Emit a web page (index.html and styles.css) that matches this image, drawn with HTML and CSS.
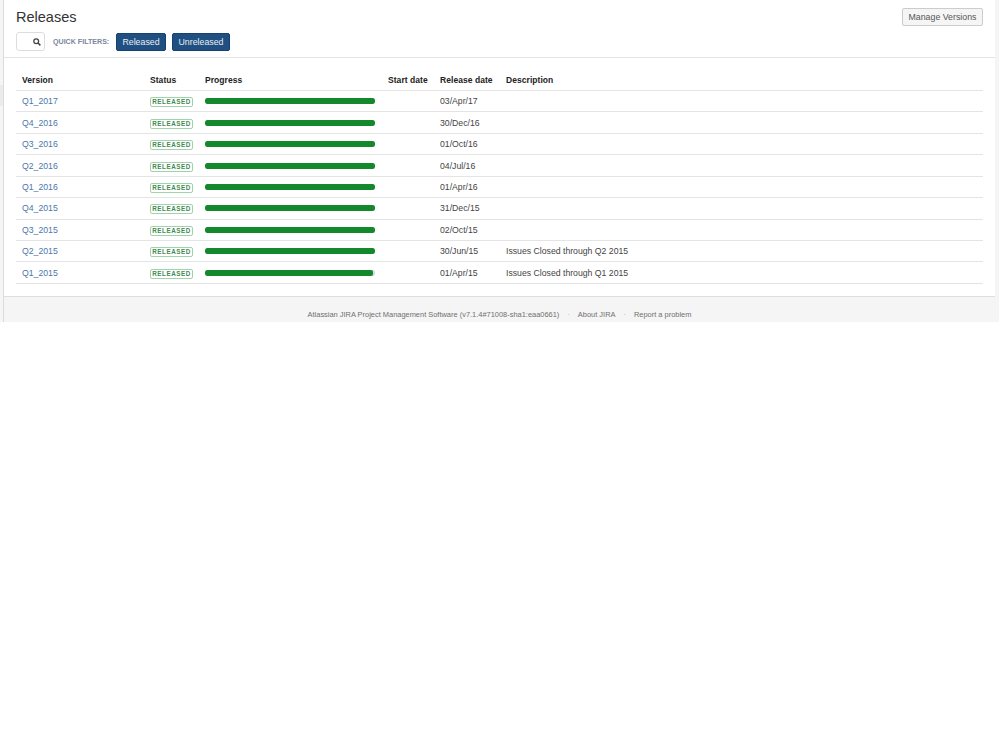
FILE: index.html
```html
<!DOCTYPE html>
<html lang="en">
<head>
<meta charset="utf-8">
<title>Releases</title>
<link rel="stylesheet" href="styles.css">
</head>
<body>
<div class="page">
  <main class="content">
    <header class="head">
      <div class="head-left">
        <h1 class="title">Releases</h1>
        <div class="filters">
          <div class="search">
            <svg class="search-icon" width="8" height="8" viewBox="0 0 10 10"><circle cx="4" cy="4" r="3" fill="none" stroke="#444" stroke-width="1.6"/><path d="M6.3 6.3 9.2 9.2" stroke="#444" stroke-width="1.9"/></svg>
          </div>
          <span class="filter-label">QUICK FILTERS:</span>
          <button class="filter-btn filter-released">Released</button>
          <button class="filter-btn filter-unreleased">Unreleased</button>
        </div>
      </div>
      <button class="manage">Manage Versions</button>
    </header>
    <section class="table-wrap">
      <table class="versions">
        <colgroup>
          <col class="c-version"><col class="c-status"><col class="c-progress"><col class="c-start"><col class="c-release"><col>
        </colgroup>
        <thead>
          <tr><th>Version</th><th>Status</th><th>Progress</th><th>Start date</th><th>Release date</th><th>Description</th></tr>
        </thead>
        <tbody>
          <tr><td><a href="#">Q1_2017</a></td><td><span class="lozenge">RELEASED</span></td><td><div class="bar"><div class="fill"></div></div></td><td></td><td>03/Apr/17</td><td></td></tr>
          <tr><td><a href="#">Q4_2016</a></td><td><span class="lozenge">RELEASED</span></td><td><div class="bar"><div class="fill"></div></div></td><td></td><td>30/Dec/16</td><td></td></tr>
          <tr><td><a href="#">Q3_2016</a></td><td><span class="lozenge">RELEASED</span></td><td><div class="bar"><div class="fill"></div></div></td><td></td><td>01/Oct/16</td><td></td></tr>
          <tr><td><a href="#">Q2_2016</a></td><td><span class="lozenge">RELEASED</span></td><td><div class="bar"><div class="fill"></div></div></td><td></td><td>04/Jul/16</td><td></td></tr>
          <tr><td><a href="#">Q1_2016</a></td><td><span class="lozenge">RELEASED</span></td><td><div class="bar"><div class="fill"></div></div></td><td></td><td>01/Apr/16</td><td></td></tr>
          <tr><td><a href="#">Q4_2015</a></td><td><span class="lozenge">RELEASED</span></td><td><div class="bar"><div class="fill"></div></div></td><td></td><td>31/Dec/15</td><td></td></tr>
          <tr><td><a href="#">Q3_2015</a></td><td><span class="lozenge">RELEASED</span></td><td><div class="bar"><div class="fill"></div></div></td><td></td><td>02/Oct/15</td><td></td></tr>
          <tr><td><a href="#">Q2_2015</a></td><td><span class="lozenge">RELEASED</span></td><td><div class="bar"><div class="fill"></div></div></td><td></td><td>30/Jun/15</td><td>Issues Closed through Q2 2015</td></tr>
          <tr><td><a href="#">Q1_2015</a></td><td><span class="lozenge">RELEASED</span></td><td><div class="bar"><div class="fill" style="width:98.8%"></div></div></td><td></td><td>01/Apr/15</td><td>Issues Closed through Q1 2015</td></tr>
        </tbody>
      </table>
    </section>
    <footer class="foot">
      <span>Atlassian JIRA Project Management Software (v7.1.4#71008-sha1:eaa0661)</span>
      <span class="dot">·</span>
      <span>About JIRA</span>
      <span class="dot">·</span>
      <span>Report a problem</span>
    </footer>
  </main>
</div>
</body>
</html>
```

FILE: styles.css
```css
* { box-sizing: border-box; }
html, body { margin: 0; padding: 0; background: #fff; }
body { font-family: "Liberation Sans", Arial, sans-serif; font-size: 9px; color: #333; }
.page { height: 322px; background: #f5f5f5 linear-gradient(#ebebeb, #ebebeb) no-repeat 0 85px / 3px 21px; padding: 0 4px 0 3px; }
.content { height: 322px; background: #fff; border-left: 1px solid #dcdcdc; display: flex; flex-direction: column; }
.head { height: 58px; padding: 8px 12px 0 12px; border-bottom: 1px solid #e4e4e4; display: flex; justify-content: space-between; align-items: flex-start; }
.title { margin: 0; font-size: 14.5px; line-height: 18px; font-weight: 400; color: #333; }
.filters { display: flex; align-items: center; margin-top: 6px; height: 19px; }
.search { width: 29px; height: 19px; border: 1px solid #ddd; border-radius: 3px; background: #fff; display: flex; align-items: center; justify-content: flex-end; padding-right: 3px; }
.search-icon { display: block; }
.filter-label { margin-left: 8px; font-size: 7.1px; font-weight: 700; color: #7a869a; width: 63px; white-space: nowrap; }
.filter-btn { height: 18px; padding: 0; margin: 0 6px 0 0; border: 1px solid #174170; border-radius: 2px; background: #205081; color: #e8edf3; font: 8.8px "Liberation Sans", Arial, sans-serif; }
.filter-released { width: 50px; }
.filter-unreleased { width: 58px; }
.manage { height: 18px; width: 81px; padding: 0; border: 1px solid #ccc; border-radius: 2px; background: #f5f5f5; color: #555; font: 8.8px "Liberation Sans", Arial, sans-serif; }
.table-wrap { padding: 11.55px 12px 0 12px; height: 238px; }
.versions { width: 967px; border-collapse: collapse; table-layout: fixed; }
.c-version { width: 128px; }
.c-status { width: 55px; }
.c-progress { width: 183px; }
.c-start { width: 52px; }
.c-release { width: 66px; }
.versions th, .versions td { padding: 0 6px; border-bottom: 1px solid #e4e4e4; text-align: left; font-size: 8.7px; color: #444; white-space: nowrap; }
.versions th { height: 21px; padding-top: 1px; font-size: 8.5px; font-weight: 700; color: #222; letter-spacing: .05px; }
.versions td { height: 21.43px; }
.versions a { color: #4a78ab; text-decoration: none; }
.lozenge { display: block; width: 43px; height: 10px; margin-top: 2px; line-height: 8.5px; border: 1px solid #9fd3a9; border-radius: 2px; text-align: center; font-size: 6.3px; font-weight: 700; color: #3f8a50; letter-spacing: .55px; }
.bar { width: 170px; height: 6px; border-radius: 2px; background: #d5dde5; overflow: hidden; }
.fill { width: 100%; height: 6px; background: #14892c; border-radius: 2px; }
.foot { flex: 1; background: #f5f5f5; border-top: 1px solid #dedede; display: flex; justify-content: center; gap: 8px; padding-top: 13px; font-size: 7.45px; color: #707070; }
.dot { color: #aaa; }
```
